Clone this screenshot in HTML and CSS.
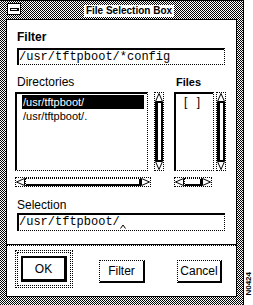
FILE: index.html
```html
<!DOCTYPE html>
<html lang="en">
<head>
    <meta charset="UTF-8">
    <title>File Selection Box</title>
    <link rel="stylesheet" href="styles.css">
</head>
<body>
    <div class="page">
        <div class="window">
            <div class="titlebar">
                <div class="menu-btn"><span class="menu-bar"></span></div>
                <div class="title-area"><span class="title">File Selection Box</span></div>
            </div>

            <div class="client">
                <div class="form">
                    <div class="label bold">Filter</div>
                    <div class="field">/usr/tftpboot/*config</div>

                    <div class="lists">
                        <div class="group dirs">
                            <div class="label">Directories</div>
                            <div class="list-row">
                                <div class="list dir-list">
                                    <div class="item selected">/usr/tftpboot/</div>
                                    <div class="item">/usr/tftpboot/.</div>
                                </div>
                                <div class="vscroll">
                                    <svg class="arrow" width="8" height="9" viewBox="0 0 8 9"><polygon points="4,0.5 7.5,8.5 0.5,8.5" fill="#fff" stroke="#000"/></svg>
                                    <div class="vslider"></div>
                                    <svg class="arrow" width="8" height="9" viewBox="0 0 8 9"><polygon points="0.5,0.5 7.5,0.5 4,8.5" fill="#fff" stroke="#000"/></svg>
                                </div>
                            </div>
                            <div class="hscroll dir-h">
                                <svg class="arrow" width="9" height="8" viewBox="0 0 9 8"><polygon points="0.5,4 8.5,0.5 8.5,7.5" fill="#fff" stroke="#000"/></svg>
                                <div class="hslider"></div>
                                <svg class="arrow" width="9" height="8" viewBox="0 0 9 8"><polygon points="0.5,0.5 8.5,4 0.5,7.5" fill="#fff" stroke="#000"/></svg>
                            </div>
                        </div>

                        <div class="group files">
                            <div class="label bold files-label">Files</div>
                            <div class="list-row">
                                <div class="list file-list">
                                    <div class="empty">[ ]</div>
                                </div>
                                <div class="vscroll">
                                    <svg class="arrow" width="8" height="9" viewBox="0 0 8 9"><polygon points="4,0.5 7.5,8.5 0.5,8.5" fill="#fff" stroke="#000"/></svg>
                                    <div class="vslider"></div>
                                    <svg class="arrow" width="8" height="9" viewBox="0 0 8 9"><polygon points="0.5,0.5 7.5,0.5 4,8.5" fill="#fff" stroke="#000"/></svg>
                                </div>
                            </div>
                            <div class="hscroll file-h">
                                <svg class="arrow" width="9" height="8" viewBox="0 0 9 8"><polygon points="0.5,4 8.5,0.5 8.5,7.5" fill="#fff" stroke="#000"/></svg>
                                <div class="hslider"></div>
                                <svg class="arrow" width="9" height="8" viewBox="0 0 9 8"><polygon points="0.5,0.5 8.5,4 0.5,7.5" fill="#fff" stroke="#000"/></svg>
                            </div>
                        </div>
                    </div>

                    <div class="label selection-label">Selection</div>
                    <div class="field sel-field">/usr/tftpboot/<svg class="caret" width="6" height="5" viewBox="0 0 6 5"><polyline points="0.5,4.5 3,1 5.5,4.5" fill="none" stroke="#000"/></svg></div>
                </div>

                <div class="separator"></div>

                <div class="buttons">
                    <div class="default-ring">
                        <div class="inner-ring">
                            <div class="btn ok">OK</div>
                        </div>
                    </div>
                    <div class="btn push filter-btn">Filter</div>
                    <div class="btn push cancel-btn">Cancel</div>
                </div>
            </div>
        </div>

        <div class="side">
            <span class="fig-id">N0424</span>
        </div>
    </div>
</body>
</html>
```

FILE: styles.css
```css
* {
    margin: 0;
    padding: 0;
    box-sizing: border-box;
}

body {
    background: #fff;
    color: #000;
    font-family: 'Liberation Sans', Arial, sans-serif;
    width: 253px;
    height: 305px;
    overflow: hidden;
}

.page {
    display: flex;
    height: 305px;
}

/* window frame */
.window {
    width: 244px;
    height: 305px;
    display: flex;
    flex-direction: column;
    background: repeating-conic-gradient(#000 0% 25%, #fff 0% 50%) 0 0 / 2px 2px;
    border-top: 1px solid #000;
    border-right: 1px solid #000;
    padding: 0 6px 8px 6px;
}

.titlebar {
    height: 18px;
    display: flex;
}

.menu-btn {
    width: 14px;
    height: 12px;
    margin: 2px 0 0 1px;
    background: #fff;
    border: 1px solid #000;
    display: flex;
    align-items: center;
    justify-content: center;
}

.menu-bar {
    width: 9px;
    height: 3px;
    border: 1px solid #000;
    border-right-width: 2px;
    border-bottom-width: 1px;
}

.title-area {
    flex: 1;
    display: flex;
    justify-content: center;
    align-items: flex-end;
}

.title {
    background: #fff;
    font-size: 10px;
    font-weight: bold;
    line-height: 12px;
    padding: 0 2px;
    margin-bottom: 2px;
}

.client {
    flex: 1;
    background: #fff;
    border: 1px solid #000;
    display: flex;
    flex-direction: column;
}

.form {
    padding: 10px 11px 13px 10px;
}

.label {
    font-size: 12px;
    line-height: 14px;
    height: 14px;
}

.bold {
    font-weight: bold;
}

.field {
    height: 17px;
    margin-top: 4px;
    border-top: 2px solid #000;
    border-left: 2px solid #000;
    border-right: 1px dotted #000;
    border-bottom: 1px dotted #000;
    font-family: 'Liberation Mono', 'DejaVu Sans Mono', monospace;
    font-size: 12px;
    line-height: 14px;
    white-space: nowrap;
}

/* directory + file lists */
.lists {
    display: flex;
    margin: 10px 0 0 -2px;
}

.dirs .label {
    padding-left: 2px;
}

.files {
    margin-left: 10px;
}

.files-label {
    padding-left: 2px;
    font-size: 11px;
}

.list-row {
    display: flex;
    margin-top: 3px;
    height: 79px;
}

.list {
    border-top: 2px solid #000;
    border-left: 2px solid #000;
    border-right: 1px dotted #000;
    border-bottom: 1px dotted #000;
}

.dir-list {
    width: 133px;
    padding: 1px 3px 0 5px;
}

.item {
    height: 14px;
    font-size: 11px;
    line-height: 14px;
    padding-left: 1px;
    white-space: nowrap;
}

.item.selected {
    background: #000;
    color: #fff;
}

.file-list {
    width: 40px;
    padding: 2px 0 0 8px;
}

.empty {
    font-size: 12px;
    line-height: 13px;
    letter-spacing: 3px;
    white-space: pre;
}

.vscroll {
    width: 10px;
    margin-left: 6px;
    border: 1px dotted #000;
    display: flex;
    flex-direction: column;
    align-items: center;
}

.files .vscroll {
    margin-left: 2px;
}

.arrow {
    display: block;
    flex-shrink: 0;
}

.vslider {
    flex: 1;
    width: 8px;
    border-left: 3px solid #000;
    border-right: 2px solid #000;
    border-top: 1px solid #000;
    border-bottom: 1px solid #000;
}

.hscroll {
    height: 10px;
    margin-top: 6px;
    border: 1px dotted #000;
    display: flex;
    align-items: center;
}

.dir-h {
    width: 136px;
}

.file-h {
    width: 38px;
}

.hslider {
    flex: 1;
    height: 8px;
    border-top: 1px dotted #000;
    border-left: 1px dotted #000;
    border-right: 2px solid #000;
    border-bottom: 2px solid #000;
}

.selection-label {
    margin-top: 11px;
}

.sel-field {
    height: 18px;
    margin-top: 1px;
}

.caret {
    display: inline-block;
    vertical-align: -4px;
}

.separator {
    border-top: 1px solid #000;
    border-bottom: 1px dotted #000;
}

/* button row */
.buttons {
    flex: 1;
    display: flex;
    align-items: flex-start;
    padding-left: 8px;
}

.default-ring {
    width: 58px;
    height: 38px;
    margin-top: 4px;
    border: 1px dotted #000;
    padding: 1px;
}

.inner-ring {
    height: 100%;
    border: 1px dotted #000;
    padding: 3px;
}

.btn {
    display: flex;
    align-items: center;
    justify-content: center;
    font-size: 12px;
}

.ok {
    height: 100%;
    border: 2px solid #000;
    border-right-width: 3px;
    border-bottom-width: 3px;
}

.push {
    height: 23px;
    margin-top: 14px;
    border-top: 1px dotted #000;
    border-left: 1px dotted #000;
    border-right: 2px solid #000;
    border-bottom: 2px solid #000;
}

.filter-btn {
    width: 46px;
    margin-left: 26px;
}

.cancel-btn {
    width: 45px;
    margin-left: 32px;
}

.side {
    flex: 1;
    display: flex;
    justify-content: center;
    align-items: flex-end;
    padding-bottom: 9px;
}

.fig-id {
    writing-mode: vertical-rl;
    transform: rotate(180deg);
    font-size: 8px;
    font-weight: bold;
    line-height: 8px;
}
```
